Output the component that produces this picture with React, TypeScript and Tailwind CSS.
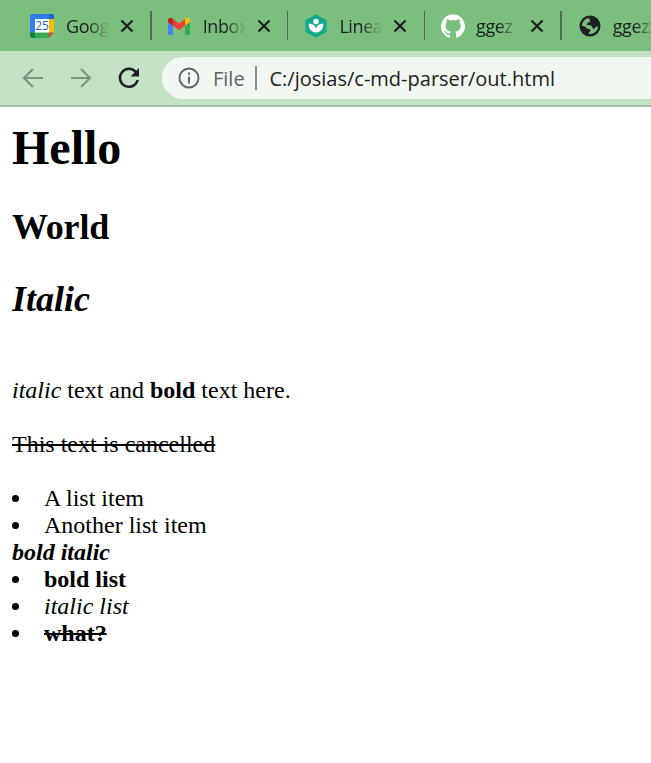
import type { ReactNode } from "react";

const CalendarIcon = () => (
  <svg className="h-6 w-6 shrink-0" viewBox="0 0 24 24">
    <path d="M2 0h16v5H5v13.500H0V2a2 2 0 0 1 2-2z" fill="#2f7de9" />
    <path d="M18.500 0H22a2 2 0 0 1 2 2v3.500h-5.500z" fill="#1967d2" />
    <path d="M18 0h1v5.500h-1z" fill="#2f7de9" />
    <path d="M19 5H24V18.500h-5z" fill="#fbbc04" />
    <path d="M5 18.500H19V24H5z" fill="#34a853" />
    <path d="M0 18.500h5V24H2a2 2 0 0 1-2-2z" fill="#188038" />
    <path d="M19 18.500H24L19 24z" fill="#ea4335" />
    <path d="M5 5h14v13.500H5z" fill="#fff" />
    <text x="12" y="16.200" textAnchor="middle" fontSize="12" fill="#1967d2" className="font-['Open_Sans',sans-serif]">25</text>
  </svg>
);

const GmailIcon = () => (
  <svg className="h-6 w-6 shrink-0" viewBox="0 0 24 24">
    <path d="M1 8l5 3.800V21H2.600A1.600 1.600 0 0 1 1 19.400z" fill="#4285f4" />
    <path d="M18 11.800L23 8v11.400a1.600 1.600 0 0 1-1.600 1.600H18z" fill="#34a853" />
    <path d="M18 5l1.200-.9C20.800 3 23 4 23 6.100V8l-5 3.800z" fill="#fbbc04" />
    <path d="M6 11.800V5l6 4.500L18 5v6.800l-6 4.500z" fill="#ea4335" />
    <path d="M1 8V6.100C1 4 3.200 3 4.800 4.100L6 5v6.800z" fill="#c5221f" />
  </svg>
);

const LeafIcon = () => (
  <svg className="ml-px mt-px h-6 w-6 shrink-0" viewBox="0 0 24 24">
    <path d="M12 .3l10.600 5.900v11.600L12 23.700 1.400 17.800V6.200z" fill="#13aa8c" />
    <circle cx="12" cy="7.500" r="2.800" fill="#fff" />
    <path d="M4.600 9.500c4.200.1 6.600 1.900 7.400 5 .8-3.100 3.200-4.900 7.400-5 0 5.500-2.700 9-7.400 9s-7.400-3.500-7.400-9z" fill="#fff" />
  </svg>
);

const GithubIcon = () => (
  <svg className="ml-px mt-px h-6 w-6 shrink-0" viewBox="0 0 24 24" fill="#fff">
    <path d="M12 .3a12 12 0 0 0-3.800 23.400c.6.100.8-.3.800-.6v-2.200c-3.300.7-4-1.400-4-1.400-.5-1.400-1.300-1.800-1.300-1.800-1.100-.7.100-.7.100-.7 1.200.1 1.800 1.200 1.800 1.200 1.100 1.900 2.900 1.300 3.600 1 .1-.8.400-1.300.8-1.600-2.700-.3-5.500-1.300-5.500-5.900 0-1.300.5-2.400 1.200-3.200-.1-.3-.5-1.500.1-3.200 0 0 1-.3 3.300 1.200a11.500 11.500 0 0 1 6 0c2.300-1.500 3.300-1.200 3.300-1.200.7 1.700.3 2.900.1 3.200.8.800 1.200 1.900 1.200 3.200 0 4.600-2.800 5.600-5.500 5.900.4.400.8 1.100.8 2.200v3.300c0 .3.200.7.800.6A12 12 0 0 0 12 .3z" />
  </svg>
);

const GlobeIcon = () => (
  <svg className="ml-px mt-px h-6 w-6 shrink-0" viewBox="0 0 24 24">
    <circle cx="12" cy="12" r="9.300" fill="none" stroke="#202124" strokeWidth="2.400" />
    <path d="M13 2.500c-1.700 1-2.300 2.500-1.300 3.700 1.200 1.200-.3 1.800-1.700 2.300-1.200.5-.3 1.700-1.700 2.500 1.400.6 4.300-.3 5.500 1.100.8 1 .2 2.400 1.600 2.700 1.900.3 1.700-2.100 3.300-2.300 1.200-.1 2 .2 2.600.7C22 7 18.500 2.700 13 2.500z" fill="#202124" />
    <path d="M2.500 11.200l4.800 1.500c1.100 1.700 2.600 2.300 4.600 2.500 1.300.6.600 2-.3 2.600-1.300.8-.5 2-1.500 3.600-4.500-1-8-5-7.600-10.200z" fill="#202124" />
  </svg>
);

const CloseIcon = () => (
  <svg className="h-[14px] w-[14px] shrink-0" viewBox="0 0 14 14">
    <path d="M1.500 1.500l11 11m0-11l-11 11" stroke="#202124" strokeWidth="2.300" fill="none" />
  </svg>
);

const tabs: { title: string; icon: ReactNode }[] = [
  { title: "Goog", icon: <CalendarIcon /> },
  { title: "Inbox", icon: <GmailIcon /> },
  { title: "Linea", icon: <LeafIcon /> },
  { title: "ggez", icon: <GithubIcon /> },
  { title: "ggez", icon: <GlobeIcon /> },
];

function Tab({ title, icon }: { title: string; icon: ReactNode }) {
  return (
    <div className="flex h-full w-[136.700px] shrink-0 items-center pl-[15px]">
      <span className="flex w-9 shrink-0">{icon}</span>
      <span className="w-[43px] shrink-0 whitespace-nowrap text-[18px] leading-6 tracking-[-0.4px] text-[#202124] [mask-image:linear-gradient(to_right,black_50%,transparent)]">
        {title}
      </span>
      <span className="ml-[11px] flex">
        <CloseIcon />
      </span>
      <span className="ml-auto h-[29px] w-[1.500px] bg-[#49704b]" />
    </div>
  );
}

function Bullet({ children }: { children: ReactNode }) {
  return (
    <li className="flex items-center">
      <span className="mr-[25px] h-[7px] w-[7px] rounded-full bg-black" />
      {children}
    </li>
  );
}

export default function App() {
  return (
    <div className="h-[763px] w-full overflow-hidden bg-white text-black">
      <header className="font-['Open_Sans','Noto_Sans',sans-serif]">
        <div className="flex h-[51px] items-center overflow-hidden bg-[#7bbf7e] pl-[15px]">
          {tabs.map((tab, i) => (
            <Tab key={i} {...tab} />
          ))}
        </div>
        <div className="flex h-14 items-start border-b-2 border-[#a4bea5] bg-[#c3e2c4] pt-[6px]">
          <div className="flex h-[42px] items-center gap-6 pl-[21px]">
            <svg className="h-6 w-6" viewBox="0 0 24 24" fill="none" stroke="#7f947f" strokeWidth="2.200">
              <path d="M22 12H3M12 3l-9 9 9 9" />
            </svg>
            <svg className="h-6 w-6" viewBox="0 0 24 24" fill="none" stroke="#7f947f" strokeWidth="2.200">
              <path d="M2 12h19M12 3l9 9-9 9" />
            </svg>
            <svg className="h-6 w-6" viewBox="0 0 24 24">
              <path d="M19 6.200A9 9 0 1 0 20.700 14" fill="none" stroke="#202124" strokeWidth="2.500" />
              <path d="M22 2v8.500h-8.500z" fill="#202124" />
            </svg>
          </div>
          <div className="ml-[21px] flex h-[42px] flex-1 items-center rounded-l-full bg-[#f1f8f1] pl-4 text-[20px]">
            <svg className="h-[22px] w-[22px]" viewBox="0 0 22 22">
              <circle cx="11" cy="11" r="9.500" fill="none" stroke="#5f6368" strokeWidth="1.900" />
              <path d="M10 9.500h2v7h-2zM10 5.500h2v2.200h-2z" fill="#5f6368" />
            </svg>
            <span className="ml-[13px] mt-px w-[42px] whitespace-nowrap text-[#5f6368]">File</span>
            <span className="h-6 w-[1.500px] bg-[#8b908c]" />
            <span className="ml-[13px] mt-px whitespace-nowrap text-[#202124]">C:/josias/c-md-parser/out.html</span>
          </div>
        </div>
      </header>
      <main className="px-3 pt-[14px] font-['Liberation_Serif',serif] text-[24px] leading-[27px]">
        <h1 className="text-[48px] leading-[54px] font-bold">Hello</h1>
        <h2 className="mt-[31px] text-[36px] leading-[42px] font-bold tracking-[-0.2px]">World</h2>
        <h2 className="mt-[30px] text-[36px] leading-[42px] font-bold italic">Italic</h2>
        <p className="mt-[57px]">
          <em>italic</em> text and <b>bold</b> text here.
        </p>
        <p className="mt-[27px]">
          <s>This text is cancelled</s>
        </p>
        <ul className="mt-[27px]">
          <Bullet>A list item</Bullet>
          <Bullet>Another list item</Bullet>
        </ul>
        <p className="font-bold italic">bold italic</p>
        <ul>
          <Bullet><b>bold list</b></Bullet>
          <Bullet><em>italic list</em></Bullet>
          <Bullet><s className="font-bold">what?</s></Bullet>
        </ul>
      </main>
    </div>
  );
}
